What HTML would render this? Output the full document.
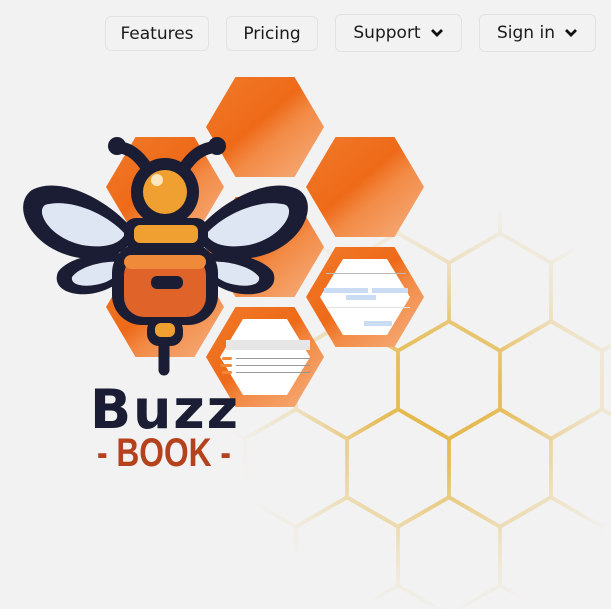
<!DOCTYPE html>
<html><head><meta charset="utf-8"><style>
html,body{margin:0;padding:0;}
body{width:611px;height:609px;background:#f2f2f2;position:relative;overflow:hidden;font-family:"Liberation Sans",sans-serif;}
.btn{position:absolute;border:1.5px solid #e2e2e2;border-radius:6px;background:#f2f2f2;color:#1a1a1a;display:flex;align-items:center;justify-content:center;box-sizing:border-box;font-family:"DejaVu Sans","Liberation Sans",sans-serif;font-size:17px;}
.btn svg{margin-left:9px}
svg.main{position:absolute;left:0;top:0}
</style></head><body>
<svg class="main" width="611" height="609" viewBox="0 0 611 609">
<defs>
<linearGradient id="og" x1="0" y1="0" x2="1" y2="1">
<stop offset="0" stop-color="#f07a2a"/><stop offset="0.45" stop-color="#ee6a18"/><stop offset="0.6" stop-color="#f28a45"/><stop offset="1" stop-color="#f6b080"/>
</linearGradient>
<radialGradient id="fade" cx="440" cy="405" r="210" gradientUnits="userSpaceOnUse">
<stop offset="0" stop-color="#fff" stop-opacity="1"/><stop offset="0.3" stop-color="#fff" stop-opacity="0.85"/><stop offset="0.7" stop-color="#fff" stop-opacity="0.25"/><stop offset="1" stop-color="#fff" stop-opacity="0"/>
</radialGradient>
<mask id="m"><rect width="611" height="609" fill="url(#fade)"/></mask>
<polygon id="hx" points="29.5,0 88.5,0 118,50 88.5,100 29.5,100 0,50"/>
<polygon id="gh" points="0,-59 51,-29.5 51,29.5 0,59 -51,29.5 -51,-29.5"/>
</defs>
<g mask="url(#m)" fill="none" stroke="#e4b440" stroke-width="3.5">
<use href="#gh" x="449" y="380"/><use href="#gh" x="347" y="380"/><use href="#gh" x="551" y="380"/><use href="#gh" x="653" y="380"/><use href="#gh" x="245" y="380"/>
<use href="#gh" x="398" y="468"/><use href="#gh" x="500" y="468"/><use href="#gh" x="296" y="468"/><use href="#gh" x="602" y="468"/>
<use href="#gh" x="398" y="292"/><use href="#gh" x="500" y="292"/><use href="#gh" x="602" y="292"/><use href="#gh" x="296" y="292"/>
<use href="#gh" x="449" y="556"/><use href="#gh" x="347" y="556"/><use href="#gh" x="551" y="556"/>
<use href="#gh" x="449" y="204"/><use href="#gh" x="551" y="204"/>
</g>
<use href="#hx" x="206" y="77" fill="url(#og)"/>
<use href="#hx" x="306" y="137" fill="url(#og)"/>
<use href="#hx" x="106" y="137" fill="url(#og)"/>
<use href="#hx" x="206" y="197" fill="url(#og)"/>
<use href="#hx" x="106" y="257" fill="url(#og)"/>
<g transform="translate(306,247)">
<use href="#hx" fill="url(#og)"/>
<polygon points="37,12 81,12 104,50 81,88 37,88 14,50" fill="#fff"/>
<rect x="18" y="41" width="44" height="5" fill="#c9dcf3"/><rect x="66" y="41" width="36" height="5" fill="#c9dcf3"/>
<rect x="40" y="48" width="30" height="5" fill="#c9dcf3"/><rect x="58" y="74" width="28" height="5" fill="#c9dcf3"/>
<rect x="20" y="26" width="80" height="1" fill="#bbb"/><rect x="20" y="60" width="84" height="1" fill="#e0e0e0"/>
</g>
<g transform="translate(206,307)">
<use href="#hx" fill="url(#og)"/>
<polygon points="37,12 81,12 104,50 81,88 37,88 14,50" fill="#fff"/>
<rect x="20" y="33" width="84" height="10" fill="#e6e6e6"/>
<rect x="16" y="50" width="10" height="3" rx="1.5" fill="#f08a3a"/><rect x="14" y="57" width="12" height="3" rx="1.5" fill="#f08a3a"/><rect x="16" y="64" width="10" height="3" rx="1.5" fill="#f08a3a"/>
<rect x="30" y="51" width="74" height="1" fill="#999"/><rect x="30" y="58" width="74" height="1" fill="#999"/><rect x="30" y="65" width="74" height="1" fill="#999"/>
</g>
<g stroke="#1a1d33" stroke-linecap="round" fill="none">
<path d="M148,170 Q135,148 117,147" stroke-width="12"/>
<path d="M183,170 Q196,148 216,147" stroke-width="12"/>
<line x1="164" y1="335" x2="164" y2="370" stroke-width="11"/>
</g>
<circle cx="117" cy="146" r="9" fill="#1a1d33"/><circle cx="217" cy="146" r="9" fill="#1a1d33"/>
<g fill="#1a1d33">
<path d="M135,232 C110,200 60,175 32,190 C10,205 30,250 80,258 C110,262 130,252 135,232Z"/>
<path d="M196,232 C221,200 271,175 299,190 C321,205 301,250 251,258 C221,262 201,252 196,232Z"/>
<path d="M135,255 C110,250 70,255 58,272 C50,292 80,300 105,290 C125,282 135,268 135,255Z"/>
<path d="M196,255 C221,250 261,255 273,272 C281,292 251,300 226,290 C206,282 196,268 196,255Z"/>
</g>
<g fill="#dfe6f3">
<path d="M125,234 C105,212 68,198 45,205 C35,212 50,238 82,245 C105,249 120,244 125,234Z"/>
<path d="M206,234 C226,212 263,198 286,205 C296,212 281,238 249,245 C226,249 211,244 206,234Z"/>
<path d="M124,262 C105,260 80,266 72,277 C70,287 90,288 106,282 C118,276 124,270 124,262Z"/>
<path d="M207,262 C226,260 251,266 259,277 C261,287 241,288 225,282 C213,276 207,270 207,262Z"/>
</g>
<circle cx="165" cy="192" r="34" fill="#1a1d33"/>
<circle cx="165" cy="192" r="22" fill="#f0a030"/>
<circle cx="157" cy="180" r="6" fill="#fbe6c0"/>
<rect x="124" y="218" width="84" height="32" rx="12" fill="#1a1d33"/>
<rect x="134" y="225" width="64" height="18" rx="6" fill="#f0a030"/>
<rect x="112" y="243" width="106" height="82" rx="30" fill="#1a1d33"/>
<rect x="124" y="255" width="82" height="62" rx="20" fill="#e0642a"/>
<rect x="124" y="255" width="82" height="14" rx="7" fill="#ee8a3a"/>
<rect x="151" y="276" width="32" height="13" rx="6" fill="#1a1d33"/>
<rect x="147" y="318" width="36" height="28" rx="12" fill="#1a1d33"/>
<rect x="155" y="323" width="20" height="14" rx="6" fill="#f0a030"/>
<text x="90" y="428" font-family="DejaVu Sans,Liberation Sans,sans-serif" font-weight="bold" font-size="54" fill="#1a1d33" textLength="148" lengthAdjust="spacing">Buzz</text>
<text x="97" y="466" font-family="Liberation Sans,sans-serif" font-weight="bold" font-size="40" fill="#b4421c" textLength="134" lengthAdjust="spacingAndGlyphs">- BOOK -</text>
</svg>
<div class="btn" style="left:105px;top:16px;width:104px;height:35px">Features</div>
<div class="btn" style="left:226px;top:16px;width:92px;height:35px">Pricing</div>
<div class="btn" style="left:335px;top:14px;width:127px;height:38px">Support<svg width="14" height="10" viewBox="0 0 14 10"><path d="M2,2 L7,7 L12,2" fill="none" stroke="#111" stroke-width="2.8"/></svg></div>
<div class="btn" style="left:479px;top:14px;width:117px;height:38px">Sign in<svg width="14" height="10" viewBox="0 0 14 10"><path d="M2,2 L7,7 L12,2" fill="none" stroke="#111" stroke-width="2.8"/></svg></div>
</body></html>
